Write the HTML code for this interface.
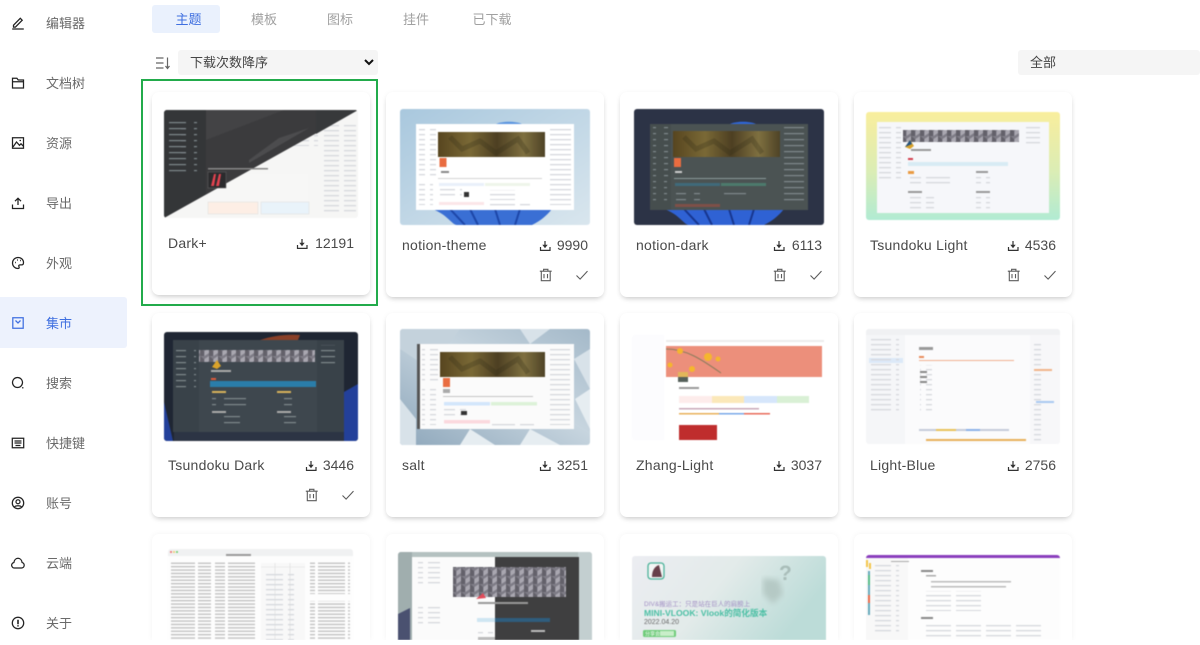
<!DOCTYPE html>
<html lang="zh"><head><meta charset="utf-8"><title>集市</title>
<style>
html,body{margin:0;padding:0;background:#fff;overflow:hidden}
body{width:1200px;height:645px;overflow:hidden;position:relative;font-family:"Liberation Sans","Noto Sans CJK SC",sans-serif;color:#4a4a4a}
#v{position:absolute;left:0;top:0;width:1200px;height:640px;overflow:hidden;background:#fff}
.n{position:absolute;left:0;width:127px;height:51px}
.n svg{position:absolute;left:11px;top:19px;width:14px;height:14px;fill:none;stroke:#222;stroke-width:1.25}
.n span{position:absolute;left:46px;top:17px;font-size:13px;line-height:19px;color:#6a6a6a;white-space:nowrap}
.n.a{background:#edf2fd;border-radius:0 3px 3px 0}.n.a span{color:#3f6fe0}.n.a svg{stroke:#3f6fe0}
.t{position:absolute;top:5px;height:28px;line-height:29px;font-size:13px;text-align:center;color:#a0a0a0;width:68px}
.t.a{background:#eaf1fd;color:#3f6fe0;border-radius:3px;text-indent:5px}
.s{position:absolute;background:#f5f5f5;top:50px;height:25px;line-height:26px;font-size:13px;color:#444;border-radius:3px}
.c{position:absolute;width:218px;background:#fff;border-radius:7px;box-shadow:0 3px 6px -2px rgba(0,0,0,.2),0 1px 6px rgba(0,0,0,.05)}
.c.e{border-radius:7px 7px 0 0;box-shadow:0 0 6px rgba(0,0,0,.05)}
.g{position:absolute;display:block;border-radius:3px;overflow:hidden;filter:blur(.5px)}
.l{position:absolute;font-size:14px;line-height:18px;color:#4a4a4a;white-space:nowrap;letter-spacing:.25px}
.r{position:absolute;font-size:14px;line-height:18px;color:#4a4a4a;text-align:right;white-space:nowrap}
</style></head><body><div id="v">

<svg width="0" height="0" style="position:absolute"><defs>
<filter id="b2"><feGaussianBlur stdDeviation="3"/></filter>
<linearGradient id="ban" x1="0" x2="1"><stop offset="0" stop-color="#57451f"/><stop offset=".3" stop-color="#7a6936"/><stop offset=".55" stop-color="#4d3f22"/><stop offset=".8" stop-color="#7f7040"/><stop offset="1" stop-color="#4e4326"/></linearGradient>
<pattern id="cube" width="9" height="8" patternUnits="userSpaceOnUse"><rect width="9" height="8" fill="#7e7c86"/><path d="M0 0l4 3v5H0z" fill="#63616a"/><path d="M4.500 3l4.500-3v5l-4.500 3z" fill="#a9a7b0"/></pattern>
<pattern id="tx" width="30" height="3.4" patternUnits="userSpaceOnUse"><rect width="27" height="1.300" fill="#bdbdbd"/></pattern>
<pattern id="txl" width="30" height="5" patternUnits="userSpaceOnUse"><rect x="0" width="25" height="1.300" fill="#d6d8dd"/></pattern>
<pattern id="txd" width="30" height="6" patternUnits="userSpaceOnUse"><rect x="0" width="22" height="1.200" fill="#7f888c"/></pattern>
<symbol id="dl" viewBox="0 0 14 14"><path d="M6 2v6M1.500 8v3.400h9.500V8" fill="none" stroke="#333" stroke-width="1.200"/><path d="M6 9.200L3.300 5.800h5.400z" fill="#333"/></symbol>
<symbol id="tr" viewBox="0 0 14 14"><path d="M.8 3.200h11.900M4.600 3V1.300h4.300V3M2.300 3.200v9.500h8.900V3.200M5 6v4.200M8.500 6v4.200" fill="none" stroke="#5c5c5c" stroke-width="1.100"/></symbol>
<symbol id="ck" viewBox="0 0 14 14"><path d="M1.500 7.500l3.600 3.600 7.400-8" fill="none" stroke="#5c5c5c" stroke-width="1.100"/></symbol>
</defs></svg>

<!-- sidebar -->
<div class="n" style="top:-3px"><svg viewBox="0 0 14 14"><path d="M2.500 9.200L9.300 2.300l1.900 1.900-6.800 6.900H2.500zM1.200 13h11.600"/></svg><span>编辑器</span></div>
<div class="n" style="top:57px"><svg viewBox="0 0 14 14"><path d="M1.500 2.300h4.400l1.300 1.700h5.300v8H1.500zM1.500 5.700h11"/></svg><span>文档树</span></div>
<div class="n" style="top:117px"><svg viewBox="0 0 14 14"><path d="M1.500 1.800h11v10.400h-11zM2 11l3.500-5 3 3.300 1.500-1.500 2.500 2.500M8.500 4.500h1.500"/></svg><span>资源</span></div>
<div class="n" style="top:177px"><svg viewBox="0 0 14 14"><path d="M7 9V2.500M4 5.200L7 2.200l3 3M1.500 8.500v4h11v-4"/></svg><span>导出</span></div>
<div class="n" style="top:237px"><svg viewBox="0 0 14 14"><path d="M7 1.500a5.500 5.500 0 1 0 0 11c1.500 0 1.300-1.200.9-1.900-.5-.9.100-1.700 1.100-1.700h1.500c1.300 0 2-1 2-2.300C12.500 3.500 10 1.500 7 1.500z"/><path d="M4 6.500h.8M6 4h.8M9 4.500h.8" stroke-width="1.500"/></svg><span>外观</span></div>
<div class="n a" style="top:297px"><svg viewBox="0 0 14 14"><path d="M1.800 1.800h10.400v10.400H1.800zM4.500 4.500L7 7l2.500-2.500"/></svg><span>集市</span></div>
<div class="n" style="top:357px"><svg viewBox="0 0 14 14"><circle cx="6.500" cy="6.500" r="5"/><path d="M11.300 11.300l1 1"/></svg><span>搜索</span></div>
<div class="n" style="top:417px"><svg viewBox="0 0 14 14"><path d="M1.300 2.300h11.400v9.400H1.300zM3.500 5h7M3.500 7h7M4.500 9.500h5"/></svg><span>快捷键</span></div>
<div class="n" style="top:477px"><svg viewBox="0 0 14 14"><circle cx="7" cy="7" r="5.700"/><circle cx="7" cy="5.700" r="2"/><path d="M3.500 11c1-1.700 6-1.700 7 0"/></svg><span>账号</span></div>
<div class="n" style="top:537px"><svg viewBox="0 0 14 14"><path d="M4 12h6.500a2.800 2.800 0 0 0 .6-5.500C10.700 4 9 2.300 7 2.300S3.300 4 2.900 6.500A2.800 2.800 0 0 0 4 12z"/></svg><span>云端</span></div>
<div class="n" style="top:597px"><svg viewBox="0 0 14 14"><circle cx="7" cy="7" r="5.700"/><path d="M7 3.800v4.400M7 9.300v1.200" stroke-width="1.600"/></svg><span>关于</span></div>

<!-- tabs -->
<div class="t a" style="left:152px">主题</div>
<div class="t" style="left:230px">模板</div>
<div class="t" style="left:306px">图标</div>
<div class="t" style="left:382px">挂件</div>
<div class="t" style="left:458px">已下载</div>

<svg style="position:absolute;left:156px;top:57px" width="15" height="13" viewBox="0 0 15 13" fill="none" stroke="#666" stroke-width="1.200"><path d="M0 1h7.500M0 6h7.500M0 11h7.500M11.500 .5v10.500M9.500 9l2 2.500 2-2.500"/></svg>
<div class="s" style="left:178px;width:200px"><span style="margin-left:12px">下载次数降序</span>
<svg style="position:absolute;right:4px;top:9px" width="10" height="7" viewBox="0 0 10 7"><path d="M1 1l4 4 4-4" fill="none" stroke="#111" stroke-width="2"/></svg></div>
<div class="s" style="left:1018px;width:182px"><span style="margin-left:12px">全部</span></div>

<!-- Row 1 -->
<div class="c" style="left:152px;top:92px;height:203px"></div>
<div style="position:absolute;left:141px;top:79px;width:233px;height:223px;border:2px solid #22ab4b"></div>
<div class="c" style="left:386px;top:92px;height:205px"></div>
<div class="c" style="left:620px;top:92px;height:205px"></div>
<div class="c" style="left:854px;top:92px;height:205px"></div>

<svg class="g" style="left:164px;top:110px" width="194" height="108" viewBox="0 0 194 108">
<rect width="194" height="108" fill="#f6f6f5"/>
<rect x="42" y="16" width="112" height="20" fill="url(#txl)"/>
<rect x="44" y="64" width="100" height="40" fill="#f7f7f6"/>
<rect x="44" y="92" width="50" height="12" fill="#fdeee5" stroke="#ddd" stroke-width=".5"/><rect x="97" y="92" width="48" height="12" fill="#e9f3fa" stroke="#ddd" stroke-width=".5"/>
<rect x="160" y="14" width="32" height="90" fill="url(#txl)"/>
<path d="M0 0H194L0 108z" fill="#3b3b3d"/>
<path d="M0 0H42V84L0 108z" fill="#343638"/>
<path d="M152 0H194L152 24z" fill="#37393b"/>
<path d="M42 0H120L42 30z" fill="#434345"/>
<path d="M85 50l30-22 30-10-60 35z" fill="#4c4c4e"/>
<rect x="5" y="10" width="28" height="55" fill="url(#txd)"/>
<rect x="17" y="17" width="14" height="30" fill="url(#txd)"/>
<rect x="44" y="58" width="60" height="1.500" fill="#888"/>
<rect x="44" y="62" width="18" height="16" fill="#2b2b2d" stroke="#666" stroke-width=".5"/>
<path d="M47 76l3-12 2 0-2 12zM52 76l3-12 2 0-2 12z" fill="#e3424f"/>
</svg>
<span class="l" style="left:168px;top:234px">Dark+</span>
<svg style="position:absolute;left:296px;top:237px" width="14" height="14"><use href="#dl"/></svg>
<span class="r" style="right:846px;top:234px">12191</span>

<svg class="g" style="left:400px;top:109px" width="190" height="116" viewBox="0 0 190 116"><defs><linearGradient id="g1" x1="0" y1="0" x2="1" y2="1"><stop offset="0" stop-color="#a9c8de"/><stop offset="1" stop-color="#d9e6ee"/></linearGradient></defs>
<rect width="190" height="116" fill="url(#g1)"/>
<path d="M32 100c15 5 20 16 25 16h75c10-5 15-10 20-16z" fill="#3a6fd4"/><path d="M50 100l15 16M70 100l8 16M95 100l5 16M120 100l-5 16" stroke="#1d46a8" stroke-width="2"/>
<path d="M96 15c6-3 20-3 26 0z" fill="#5a94e0"/>
<rect x="16" y="15" width="158" height="86" fill="#fff"/>
<rect x="19" y="18" width="17" height="52" fill="url(#txl)"/><rect x="19" y="72" width="14" height="24" fill="url(#txl)"/>
<rect x="38" y="23" width="107" height="25" fill="url(#ban)"/>
<path d="M50 28l12 12 18-8 16 12 22-14 10 14" stroke="#2d2614" stroke-width="5" fill="none" opacity=".25"/>
<rect x="39.500" y="49" width="7" height="9" fill="#e96c40"/><rect x="41" y="62" width="8" height="2" fill="#888"/>
<rect x="38" y="69" width="104" height="1" fill="#d4d4d4"/>
<rect x="39" y="74" width="45" height="3" fill="#e9f0fa"/><rect x="85" y="74" width="45" height="3" fill="#eef5ea"/>
<rect x="40" y="80" width="22" height="10" fill="url(#txl)"/><rect x="64" y="83" width="5" height="5" fill="#333"/><rect x="88" y="81" width="30" height="10" fill="url(#txl)"/>
<rect x="39" y="93" width="45" height="3" fill="#fbe6e8"/><rect x="90" y="94" width="40" height="6" fill="url(#txl)"/>
<rect x="149" y="18" width="22" height="78" fill="url(#txl)"/></svg>
<span class="l" style="left:402px;top:236px">notion-theme</span>
<svg style="position:absolute;left:539px;top:239px" width="14" height="14"><use href="#dl"/></svg>
<span class="r" style="right:612px;top:236px">9990</span>
<svg style="position:absolute;left:539px;top:268px" width="14" height="14"><use href="#tr"/></svg>
<svg style="position:absolute;left:575px;top:268px" width="14" height="14"><use href="#ck"/></svg>

<svg class="g" style="left:634px;top:109px" width="190" height="116" viewBox="0 0 190 116">
<rect width="190" height="116" fill="#2c3346"/>
<path d="M30 100c15 5 20 16 25 16h75c10-5 15-10 20-16z" fill="#2f62d4"/><path d="M50 100l15 16M70 100l8 16M95 100l5 16M120 100l-5 16" stroke="#17368f" stroke-width="2"/>
<path d="M96 15c6-3 20-3 26 0z" fill="#2f66d8"/>
<rect x="16" y="15" width="158" height="86" fill="#4b5353"/>
<rect x="16" y="15" width="21" height="86" fill="#464e4e"/>
<rect x="19" y="18" width="15" height="50" fill="url(#txd)"/><rect x="19" y="72" width="14" height="24" fill="url(#txd)"/>
<rect x="39" y="22" width="107" height="26" fill="url(#ban)"/>
<path d="M50 28l12 12 18-8 16 12 22-14 10 14" stroke="#2d2614" stroke-width="5" fill="none" opacity=".25"/>
<rect x="40" y="49" width="7" height="9" fill="#e96c40"/><rect x="41" y="62" width="7" height="2" fill="#ccc"/>
<rect x="40" y="69" width="92" height="1" fill="#8a9a9a"/>
<rect x="41" y="74" width="45" height="3" fill="#3f6a7a"/><rect x="87" y="74" width="45" height="3" fill="#4c7a6c"/>
<rect x="42" y="80" width="24" height="14" fill="url(#txd)"/><rect x="90" y="82" width="30" height="8" fill="url(#txd)"/>
<rect x="41" y="95" width="45" height="3" fill="#7e5048"/>
<rect x="150" y="18" width="20" height="78" fill="url(#txd)"/></svg>
<span class="l" style="left:636px;top:236px">notion-dark</span>
<svg style="position:absolute;left:773px;top:239px" width="14" height="14"><use href="#dl"/></svg>
<span class="r" style="right:378px;top:236px">6113</span>
<svg style="position:absolute;left:773px;top:268px" width="14" height="14"><use href="#tr"/></svg>
<svg style="position:absolute;left:809px;top:268px" width="14" height="14"><use href="#ck"/></svg>

<svg class="g" style="left:866px;top:112px" width="194" height="108" viewBox="0 0 194 108"><defs><linearGradient id="g4" x1="0" y1="0" x2="0" y2="1"><stop offset="0" stop-color="#f9ee9d"/><stop offset=".55" stop-color="#dbedb5"/><stop offset="1" stop-color="#b1ebd3"/></linearGradient></defs>
<rect width="194" height="108" fill="url(#g4)"/>
<rect x="11" y="10" width="172" height="91" fill="#f6f7fa"/>
<rect x="13" y="13" width="22" height="56" fill="url(#txl)"/>
<rect x="37" y="18" width="116" height="12" fill="url(#cube)"/>
<path d="M39 35l5-7 4 6-4 3z" fill="#d9a22a"/><path d="M39 35l5-7 2 4z" fill="#23527f"/>
<rect x="45" y="37" width="20" height="2" fill="#999"/>
<rect x="42" y="46" width="5" height="2" fill="#d33c4b"/>
<rect x="42" y="50" width="100" height="4" fill="#d8ebf4"/>
<rect x="42" y="59" width="6" height="3" fill="#e99a42"/><rect x="110" y="59" width="12" height="2" fill="#999"/>
<rect x="44" y="65" width="40" height="9" fill="url(#txl)"/><rect x="110" y="65" width="14" height="9" fill="url(#txl)"/>
<rect x="42" y="79" width="14" height="2" fill="#999"/><rect x="110" y="79" width="14" height="2" fill="#999"/>
<rect x="44" y="83" width="24" height="14" fill="url(#txl)"/><rect x="110" y="83" width="14" height="14" fill="url(#txl)"/>
<rect x="160" y="14" width="14" height="20" fill="url(#txl)"/></svg>
<span class="l" style="left:870px;top:236px">Tsundoku Light</span>
<svg style="position:absolute;left:1007px;top:239px" width="14" height="14"><use href="#dl"/></svg>
<span class="r" style="right:144px;top:236px">4536</span>
<svg style="position:absolute;left:1007px;top:268px" width="14" height="14"><use href="#tr"/></svg>
<svg style="position:absolute;left:1043px;top:268px" width="14" height="14"><use href="#ck"/></svg>

<!-- Row 2 -->
<div class="c" style="left:152px;top:313px;height:204px"></div>
<div class="c" style="left:386px;top:313px;height:204px"></div>
<div class="c" style="left:620px;top:313px;height:204px"></div>
<div class="c" style="left:854px;top:313px;height:204px"></div>

<svg class="g" style="left:164px;top:332px" width="194" height="109" viewBox="0 0 194 109">
<rect width="194" height="109" fill="#1f2633"/>
<path d="M96 8c12-4 26-6 40-5l-2 5z" fill="#8a4028"/>
<path d="M0 70l9 39H0zM180 60l14-8v57h-14z" fill="#23409a"/>
<rect x="10" y="100" width="170" height="9" fill="#2c3444"/>
<rect x="9" y="8" width="171" height="92" fill="#3e474e"/>
<rect x="9" y="8" width="26" height="92" fill="#394249"/><rect x="153" y="8" width="27" height="92" fill="#394249"/>
<rect x="12" y="14" width="20" height="46" fill="url(#txd)"/><rect x="157" y="13" width="14" height="20" fill="url(#txd)"/>
<rect x="35" y="18" width="116" height="12" fill="url(#cube)"/>
<path d="M48 35l5-7 4 6-4 3z" fill="#d9a22a"/>
<rect x="47" y="38" width="20" height="2" fill="#aaa"/>
<rect x="47" y="46" width="5" height="2" fill="#dd5a3a"/>
<rect x="46" y="49" width="106" height="6" fill="#2a7daa"/>
<rect x="48" y="59" width="14" height="2" fill="#d9b35a"/><rect x="113" y="59" width="14" height="2" fill="#d9b35a"/>
<rect x="48" y="64" width="40" height="10" fill="url(#txd)"/><rect x="116" y="64" width="12" height="10" fill="url(#txd)"/>
<rect x="48" y="79" width="14" height="2" fill="#aaa"/><rect x="113" y="79" width="14" height="2" fill="#aaa"/>
<rect x="52" y="84" width="24" height="12" fill="url(#txd)"/><rect x="118" y="84" width="14" height="12" fill="url(#txd)"/></svg>
<span class="l" style="left:168px;top:456px">Tsundoku Dark</span>
<svg style="position:absolute;left:305px;top:459px" width="14" height="14"><use href="#dl"/></svg>
<span class="r" style="right:846px;top:456px">3446</span>
<svg style="position:absolute;left:305px;top:488px" width="14" height="14"><use href="#tr"/></svg>
<svg style="position:absolute;left:341px;top:488px" width="14" height="14"><use href="#ck"/></svg>

<svg class="g" style="left:400px;top:329px" width="190" height="116" viewBox="0 0 190 116"><defs><linearGradient id="g6" x1="0" y1="1" x2="1" y2="0"><stop offset="0" stop-color="#8ea7bb"/><stop offset=".55" stop-color="#c7d5df"/><stop offset="1" stop-color="#a4b9c9"/></linearGradient></defs>
<rect width="190" height="116" fill="url(#g6)"/>
<path d="M0 0h60L30 40 0 20z" fill="#c4d2dc"/><path d="M120 0h30l-20 15zM174 30l16-10v40zM0 70l16 20v26H0z" fill="#d8e2e9"/><path d="M70 100l25 16H60zM130 100l30 16h-40zM175 70l15 30v-40z" fill="#e6edf1"/>
<rect x="17" y="15" width="157" height="85" fill="#fbfbfb"/><rect x="17" y="15" width="3" height="85" fill="#555"/>
<rect x="22" y="18" width="16" height="36" fill="url(#txl)"/><rect x="22" y="60" width="14" height="36" fill="url(#txl)"/>
<rect x="40" y="23" width="105" height="25" fill="url(#ban)"/>
<path d="M50 28l12 12 18-8 16 12 22-14 10 14" stroke="#2d2614" stroke-width="5" fill="none" opacity=".25"/>
<rect x="43" y="49" width="7" height="9" fill="#e96c40"/><rect x="43" y="60" width="7" height="4" fill="#aaa"/>
<rect x="43" y="67" width="90" height="1" fill="#c4c4c4"/>
<rect x="44" y="73" width="46" height="3.500" fill="#d3e6fb"/><rect x="91" y="73" width="46" height="3.500" fill="#ddf2d8"/>
<rect x="44" y="79" width="22" height="9" fill="url(#txl)"/><rect x="61" y="82" width="6" height="4" fill="#333"/>
<rect x="44" y="91" width="46" height="3.500" fill="#fbd9de"/><rect x="92" y="92" width="42" height="7" fill="url(#txl)"/>
<rect x="150" y="18" width="20" height="78" fill="url(#txl)"/></svg>
<span class="l" style="left:402px;top:456px">salt</span>
<svg style="position:absolute;left:539px;top:459px" width="14" height="14"><use href="#dl"/></svg>
<span class="r" style="right:612px;top:456px">3251</span>

<svg class="g" style="left:632px;top:335px" width="194" height="105" viewBox="0 0 194 105">
<rect width="194" height="105" fill="#fff"/><rect width="32" height="105" fill="#fcfcfe"/>
<rect x="34" y="5" width="158" height="2" fill="#ececec"/>
<rect x="34" y="11" width="156" height="31" fill="#ec8f7b"/>
<path d="M34 14c20 0 35 10 55 24" stroke="#8a7c5c" stroke-width="1" fill="none"/>
<circle cx="48" cy="16" r="3" fill="#f5b62e"/><circle cx="60" cy="34" r="3" fill="#f5b62e"/><circle cx="76" cy="22" r="4" fill="#f5b62e"/><circle cx="38" cy="30" r="2.500" fill="#f5b62e"/><circle cx="86" cy="24" r="2.500" fill="#f5b62e"/>
<rect x="46" y="37" width="10" height="10" fill="#55605a"/><rect x="46" y="37" width="10" height="5" fill="#e2b65a"/>
<rect x="47" y="52" width="20" height="2" fill="#999"/>
<rect x="47" y="61" width="33" height="7" fill="#fdeceb"/><rect x="80" y="61" width="32" height="7" fill="#fbe8b9"/><rect x="112" y="61" width="33" height="7" fill="#d6e6fb"/><rect x="145" y="61" width="32" height="7" fill="#d9f0d5"/>
<rect x="47" y="73" width="80" height="1.500" fill="#c9a8b8"/><rect x="47" y="78" width="40" height="1.500" fill="#e8b05a"/><rect x="87" y="78" width="25" height="1.500" fill="#7aa8e8"/><rect x="112" y="78" width="26" height="1.500" fill="#e86a5a"/>
<rect x="47" y="90" width="38" height="15" fill="#bf2d2d"/></svg>
<span class="l" style="left:636px;top:456px">Zhang-Light</span>
<svg style="position:absolute;left:773px;top:459px" width="14" height="14"><use href="#dl"/></svg>
<span class="r" style="right:378px;top:456px">3037</span>

<svg class="g" style="left:866px;top:329px" width="194" height="115" viewBox="0 0 194 115">
<rect width="194" height="115" fill="#fbfbfc"/><rect width="39" height="115" fill="#f5f6f8"/><rect x="164" width="30" height="115" fill="#f7f7f9"/>
<rect width="194" height="6" fill="#f0f1f3"/>
<rect x="3" y="29" width="34" height="5" fill="#dce9f8"/>
<rect x="5" y="10" width="28" height="75" fill="url(#txl)"/>
<rect x="53" y="18" width="14" height="3" fill="#999"/><rect x="53" y="27" width="5" height="2" fill="#e98a5a"/><rect x="53" y="31" width="95" height="1" fill="#f0b090"/>
<rect x="54" y="36" width="12" height="48" fill="url(#txl)"/><rect x="54" y="42" width="7" height="2" fill="#888"/><rect x="54" y="47" width="7" height="2" fill="#888"/><rect x="54" y="52" width="7" height="2" fill="#888"/>
<rect x="53" y="100" width="90" height="2" fill="#c4cbda"/><rect x="70" y="100" width="20" height="2" fill="#e8c25a"/><rect x="100" y="100" width="14" height="2" fill="#8ab0e8"/>
<rect x="60" y="110" width="100" height="2" fill="#e8b05a"/>
<rect x="168" y="12" width="12" height="100" fill="url(#txl)"/><rect x="168" y="40" width="18" height="2" fill="#f0b48a"/><rect x="170" y="72" width="18" height="2" fill="#a9c8f0"/></svg>
<span class="l" style="left:870px;top:456px">Light-Blue</span>
<svg style="position:absolute;left:1007px;top:459px" width="14" height="14"><use href="#dl"/></svg>
<span class="r" style="right:144px;top:456px">2756</span>

<!-- Row 3 -->
<div class="c e" style="left:152px;top:534px;height:106px"></div>
<div class="c e" style="left:386px;top:534px;height:106px"></div>
<div class="c e" style="left:620px;top:534px;height:106px"></div>
<div class="c e" style="left:854px;top:534px;height:106px"></div>

<svg class="g" style="left:168px;top:549px;border-radius:3px 3px 0 0" width="185" height="91" viewBox="0 0 185 91">
<rect width="185" height="91" fill="#fdfdfd"/><rect width="185" height="7" fill="#f0f1f2"/>
<circle cx="3" cy="3" r="1" fill="#e66"/><circle cx="6" cy="3" r="1" fill="#ec6"/><circle cx="9" cy="3" r="1" fill="#6c6"/>
<rect x="58" y="5" width="25" height="2" fill="#999"/>
<rect x="3" y="13" width="40" height="78" fill="url(#tx)"/><rect x="47" y="13" width="42" height="78" fill="url(#tx)"/>
<rect x="93" y="14" width="44" height="77" fill="#f8f8f8"/><path d="M93 18h44M107 14v77M122 14v77" stroke="#ddd" stroke-width=".6"/><rect x="98" y="22" width="28" height="69" fill="url(#txl)"/>
<rect x="142" y="13" width="40" height="32" fill="url(#tx)"/><rect x="142" y="52" width="40" height="39" fill="url(#tx)"/></svg>

<svg class="g" style="left:398px;top:552px;border-radius:3px 3px 0 0" width="194" height="88" viewBox="0 0 194 88">
<rect width="194" height="88" fill="#b4c1c0"/><path d="M0 0h14v88H0z" fill="#a0aeae"/><path d="M0 62l12-6v32H0z" fill="#4a5170"/><path d="M180 0h14v88h-14z" fill="#c3cfd0"/>
<rect x="14" y="5" width="83" height="83" fill="#fbfbfb"/><rect x="97" y="5" width="84" height="83" fill="#3f3f40"/>
<rect x="20" y="10" width="22" height="24" fill="url(#txl)"/><rect x="20" y="52" width="22" height="20" fill="url(#txl)"/>
<rect x="55" y="15" width="113" height="30" fill="url(#cube)"/>
<path d="M78 47l7-6 3 5z" fill="#e04b5a"/>
<rect x="80" y="50" width="50" height="2" fill="#999"/>
<rect x="79" y="66" width="73" height="4" fill="#2f5d7d"/><rect x="79" y="66" width="18" height="4" fill="#cfe6f2"/>
<rect x="80" y="80" width="15" height="8" fill="url(#txl)"/><rect x="133" y="78" width="14" height="2" fill="#bbb"/><rect x="80" y="85" width="17" height="3" fill="#bbb"/></svg>

<svg class="g" style="left:632px;top:556px;border-radius:3px 3px 0 0" width="194" height="84" viewBox="0 0 194 84"><defs><linearGradient id="g11" x1="0" x2="1" y1="0" y2=".35"><stop offset="0" stop-color="#ecedf2"/><stop offset=".5" stop-color="#e3ebea"/><stop offset="1" stop-color="#bcdcd8"/></linearGradient></defs>
<rect width="194" height="84" fill="url(#g11)"/>
<path d="M131 22l16 2 4 14-10 10-10-10z" fill="#b5c9c5" filter="url(#b2)"/>
<text x="147" y="24" font-family="Liberation Sans" font-size="21" font-weight="bold" fill="#a9bdb9">?</text>
<rect x="16" y="7" width="16" height="16" rx="3" fill="#f3f5f4" stroke="#4cb29a" stroke-width="1.300"/><path d="M20 21c0-8 4-11 7-12l3 12z" fill="#67404a"/>
<text x="12" y="50" font-family="Liberation Sans,Noto Sans CJK SC,sans-serif" font-size="6.500" fill="#a28fc4">DIV&amp;搬运工：只是站在巨人的肩膀上</text>
<text x="12" y="60" font-family="Liberation Sans,Noto Sans CJK SC,sans-serif" font-size="8.600" font-weight="bold" fill="#4abfa4">MINI-VLOOK: Vlook的简化版本</text>
<text x="12" y="68" font-family="Liberation Sans,sans-serif" font-size="7" fill="#666">2022.04.20</text>
<rect x="11" y="74" width="33" height="7" rx="1.500" fill="#6fcc7a"/><rect x="28" y="75" width="14" height="5" fill="#c8eec9"/>
<text x="13" y="79.500" font-family="Noto Sans CJK SC,sans-serif" font-size="5" fill="#fff">分享会</text></svg>

<svg class="g" style="left:866px;top:555px;border-radius:3px 3px 0 0" width="194" height="85" viewBox="0 0 194 85">
<rect width="194" height="85" fill="#fdfdfd"/><rect width="194" height="3" fill="#8a3ebd"/><rect width="42" height="85" y="3" fill="#f8f8f8"/>
<path d="M0 5h2v7H0zM3 8h2v6H3z" fill="#f3c54a"/><rect x="2" y="16" width="2" height="44" fill="#6ab"/><rect x="2" y="20" width="2" height="10" fill="#5b8"/><rect x="2" y="40" width="2" height="8" fill="#e86a4a"/>
<rect x="9" y="10" width="24" height="70" fill="url(#txl)"/>
<rect x="25" y="6" width="18" height="1" fill="#aaa"/>
<rect x="55" y="15" width="12" height="2" fill="#888"/><rect x="60" y="20" width="10" height="1.500" fill="#aaa"/>
<rect x="65" y="26" width="80" height="1.500" fill="#bbb"/><rect x="65" y="31" width="75" height="1.500" fill="#bbb"/>
<rect x="55" y="36" width="60" height="20" fill="url(#txl)"/>
<rect x="55" y="62" width="12" height="2" fill="#888"/><rect x="55" y="68" width="120" height="17" fill="url(#txl)"/></svg>

</div></body></html>
